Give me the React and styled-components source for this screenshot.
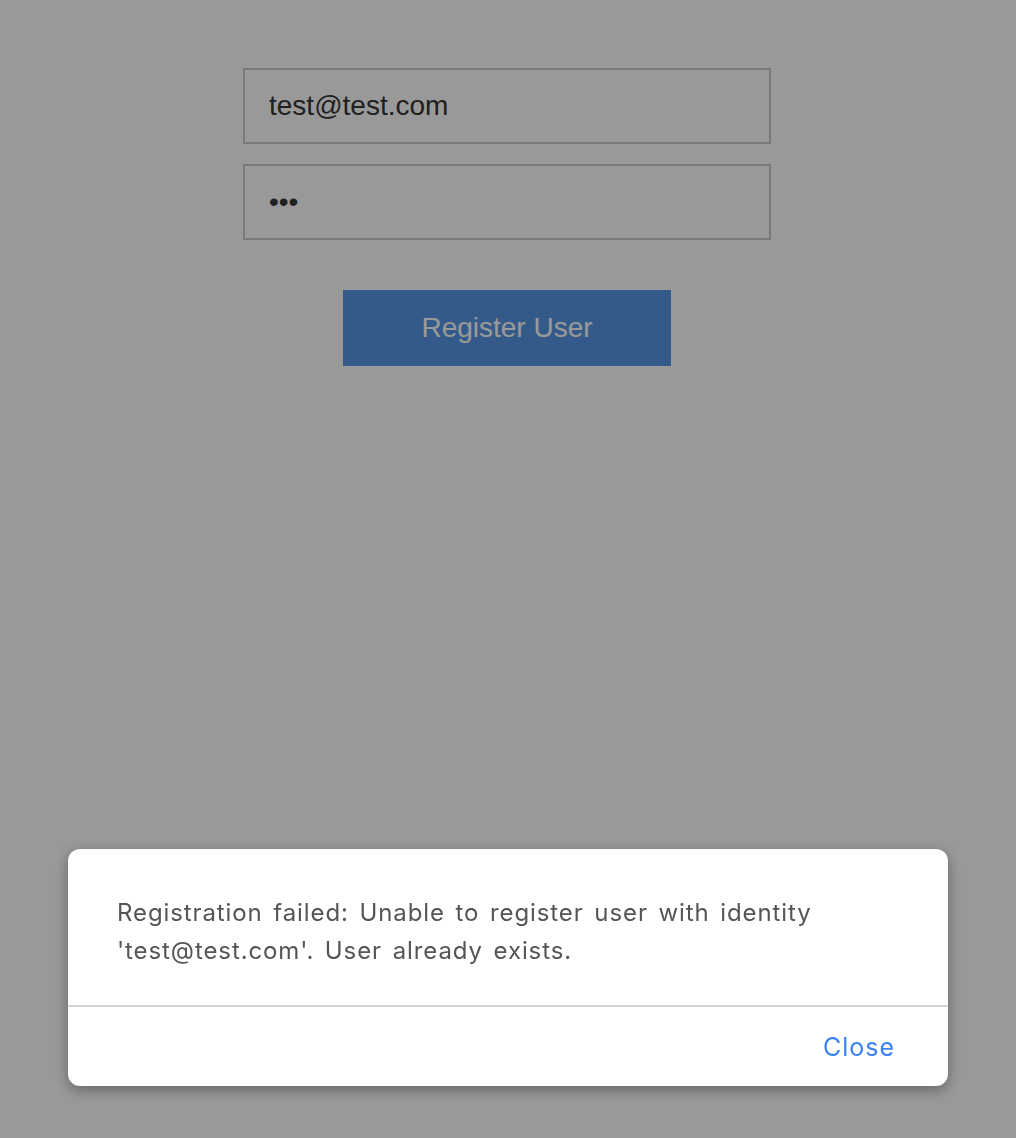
import React from 'react';
import styled, { createGlobalStyle } from 'styled-components';

const GlobalStyle = createGlobalStyle`
  html, body {
    margin: 0;
    padding: 0;
    background: #ffffff;
    font-family: "Liberation Sans", Arial, sans-serif;
  }
`;

const Page = styled.div`
  min-height: 1138px;
  display: flex;
  flex-direction: column;
  align-items: center;
  padding: 68px 2px 0 0;
  box-sizing: border-box;
`;

const Form = styled.form`
  width: 528px;
  display: flex;
  flex-direction: column;
  align-items: center;
  gap: 20px;
`;

const Input = styled.input`
  width: 100%;
  height: 76px;
  box-sizing: border-box;
  border: 2px solid #cccccc;
  padding: 0 24px;
  font-family: "Liberation Sans", Arial, sans-serif;
  font-size: 28px;
  color: #363636;
  background: #ffffff;
  outline: none;
`;

const Button = styled.button`
  margin-top: 30px;
  width: 328px;
  height: 76px;
  border: none;
  background: #5796e6;
  color: #ffffff;
  font-family: "Liberation Sans", Arial, sans-serif;
  font-size: 28px;
  cursor: pointer;
`;

const Overlay = styled.div`
  position: fixed;
  inset: 0;
  background: rgba(0, 0, 0, 0.4);
  display: flex;
  align-items: flex-end;
  justify-content: center;
  padding-bottom: 52px;
  box-sizing: border-box;
`;

const Dialog = styled.div`
  width: 880px;
  background: #ffffff;
  border-radius: 12px;
  box-shadow: 0 4px 14px rgba(0, 0, 0, 0.35);
  overflow: hidden;
  font-family: Inter, Roboto, sans-serif;
`;

const Message = styled.p`
  margin: 0;
  padding: 45px 48px 35px 49px;
  font-size: 24px;
  line-height: 38px;
  letter-spacing: 0.9px;
  word-spacing: 3px;
  color: #555555;
  border-bottom: 2px solid #d6d6d6;
`;

const Actions = styled.div`
  height: 79px;
  display: flex;
  align-items: center;
  justify-content: flex-end;
  padding: 0 53px 0 0;
`;

const TextButton = styled.button`
  border: none;
  background: none;
  padding: 0;
  font-family: Inter, Roboto, sans-serif;
  font-size: 25px;
  letter-spacing: 1px;
  color: #3a82f6;
  cursor: pointer;
`;

export default function App() {
  return (
    <>
      <GlobalStyle />
      <Page>
        <Form onSubmit={(e) => e.preventDefault()}>
          <Input type="email" defaultValue="test@test.com" />
          <Input type="password" defaultValue="abc" />
          <Button type="submit">Register User</Button>
        </Form>
      </Page>
      <Overlay>
        <Dialog>
          <Message>
            Registration failed: Unable to register user with identity
            'test@test.com'. User already exists.
          </Message>
          <Actions>
            <TextButton>Close</TextButton>
          </Actions>
        </Dialog>
      </Overlay>
    </>
  );
}
